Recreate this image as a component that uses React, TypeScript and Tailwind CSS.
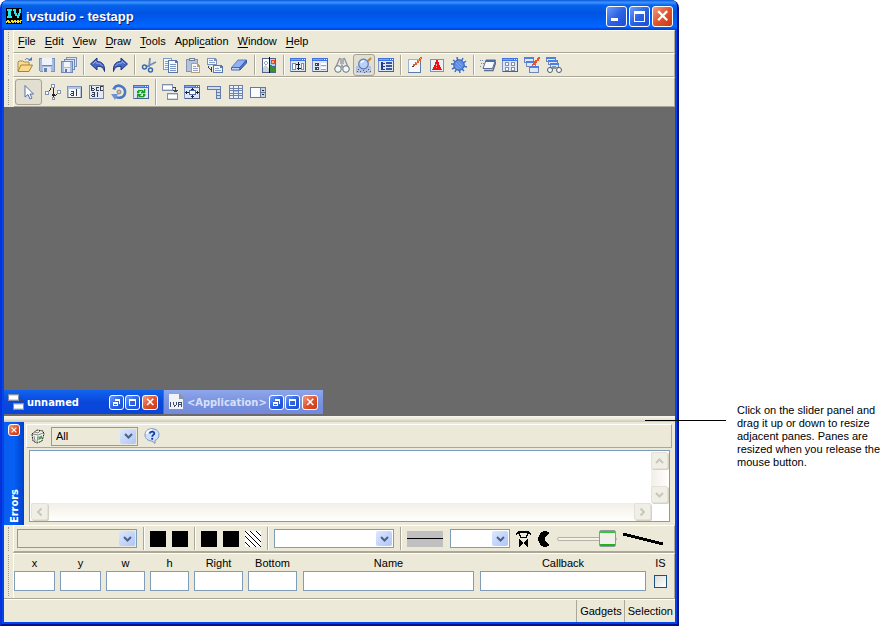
import { Fragment, useState, type ReactNode } from 'react';

const Svg = ({ children, smooth = false }: { children: ReactNode; smooth?: boolean }) => (
  <svg
    viewBox="0 0 16 16"
    className="w-4 h-4 shrink-0"
    fill="none"
    shapeRendering={smooth ? 'auto' : 'crispEdges'}
    aria-hidden="true"
  >
    {children}
  </svg>
);

// Small window with a blue caption, shared by many of the toolbar icons
const Frame = ({ children }: { children?: ReactNode }) => (
  <Svg>
    <path d="M0 1h16v14H0z" fill="#7f95c0" />
    <path d="M1 4h14v10H1z" fill="#dfe6f3" />
    <path d="M0 1h16v3H0z" fill="#3f72e0" />
    <path d="M1 2h10v1H1z" fill="#7fa6f6" />
    <path d="M12 2h1v1h-1zM14 2h1v1h-1z" fill="#fff" />
    <path d="M15 4h1v11H1v-1h14z" fill="#4a628f" />
    {children}
  </Svg>
);

const MiniWin = ({ x, y, w = 9, h = 6 }: { x: number; y: number; w?: number; h?: number }) => (
  <g>
    <rect x={x} y={y} width={w} height={h} fill="#7388ad" />
    <rect x={x + 1} y={y + 2} width={w - 2} height={h - 3} fill="#dfe8f9" />
    <rect x={x} y={y} width={w} height={2} fill="#4d80e6" />
  </g>
);

const icons: Record<string, ReactNode> = {
  open: (
    <Svg smooth>
      <path d="M1 14V5l1-1h4l1 1h5v3" fill="#f4dc9c" stroke="#b08a3c" />
      <path d="M1 14.500 4 8h11.500L12 14.500z" fill="#fbd98a" stroke="#a8823c" />
      <path d="M8 3c1-2 4-2 5 1" stroke="#4a72b8" />
      <path d="M11 3.500h4V0z" fill="#4a72b8" />
    </Svg>
  ),
  save: (
    <Svg>
      <path d="M0 1h16v14H1V14H0z" fill="#7c93be" />
      <path d="M1 2h14v12H1z" fill="#a9bbdc" />
      <path d="M3 1h10v7H3z" fill="#eef2fa" />
      <path d="M3 8h10v1H3z" fill="#6d84b0" />
      <path d="M4 10h8v5H4z" fill="#dfe6f3" />
      <path d="M5 11h3v4H5z" fill="#6b82ae" />
    </Svg>
  ),
  saveAll: (
    <Svg>
      <path d="M5 0h11v10H5z" fill="#7c93be" />
      <path d="M6 1h9v8H6z" fill="#dbe4f4" />
      <path d="M3 2h11v11H3z" fill="#7188b4" />
      <path d="M4 3h9v9H4z" fill="#dbe4f4" />
      <path d="M0 4h12v12H0z" fill="#7088b6" />
      <path d="M1 5h10v10H1z" fill="#a9bbdc" />
      <path d="M3 5h6v5H3z" fill="#f1f4fb" />
      <path d="M3 11h6v4H3z" fill="#e6ebf6" />
      <path d="M4 12h2v3H4z" fill="#5e76a5" />
    </Svg>
  ),
  undo: (
    <Svg smooth>
      <path d="M.5 7 7 1v3.500c5 0 8 3 7.500 10-1-4-3-5.500-7.500-5V13z" fill="#4668c4" stroke="#1d3586" />
      <path d="M3 7l3-3v2c3 0 5 .8 6.500 3" stroke="#8fa9ea" />
    </Svg>
  ),
  redo: (
    <Svg smooth>
      <path d="M15.500 7 9 1v3.500c-5 0-8 3-7.500 10 1-4 3-5.500 7.500-5V13z" fill="#4668c4" stroke="#1d3586" />
      <path d="M13 7l-3-3v2C7 6 5 6.800 3.500 9" stroke="#8fa9ea" />
    </Svg>
  ),
  cut: (
    <Svg smooth>
      <path d="M9 1 8 10M15 5 5 10" stroke="#6f8cba" strokeWidth="1.800" />
      <circle cx="3.500" cy="10" r="2" stroke="#3b68ad" strokeWidth="1.500" />
      <circle cx="9.500" cy="13" r="2" stroke="#3b68ad" strokeWidth="1.500" />
    </Svg>
  ),
  copy: (
    <Svg>
      <path d="M0 1h9v12H0z" fill="#7f97c3" />
      <path d="M1 2h7v10H1z" fill="#f4f7fc" />
      <path d="M2 4h4v1H2zM2 6h4v1H2zM2 8h4v1H2zM2 10h4v1H2z" fill="#8aa0c8" />
      <path d="M5 3h8l2 2v11H5z" fill="#5a75a8" />
      <path d="M6 4h6v2h2v9H6z" fill="#f4f7fc" />
      <path d="M7 7h6v1H7zM7 9h6v1H7zM7 11h6v1H7zM7 13h6v1H7z" fill="#7f97c3" />
    </Svg>
  ),
  paste: (
    <Svg>
      <path d="M1 2h12v13H1z" fill="#8393b0" />
      <path d="M2 3h10v11H2z" fill="#b7c2d6" />
      <path d="M4 1h6v3H4z" fill="#6e7f9f" />
      <path d="M5 2h4v1H5z" fill="#e4e9f2" />
      <path d="M6 6h6l3 3v7H6z" fill="#c09a78" />
      <path d="M7 7h5v3h2v5H7z" fill="#fdfaf4" />
      <path d="M8 9h3v1H8zM8 11h5v1H8zM8 13h5v1H8z" fill="#8ba4d0" />
    </Svg>
  ),
  duplicate: (
    <Svg>
      <path d="M0 1h8l2 2v5H0z" fill="#7c92bb" />
      <path d="M1 2h6v2h2v3H1z" fill="#f4f7fc" />
      <path d="M2 3h4v1H2zM2 5h6v1H2z" fill="#8ba4d0" />
      <path d="M6 8h8l2 2v6H6z" fill="#5a75a8" />
      <path d="M7 9h6v2h2v4H7z" fill="#f4f7fc" />
      <path d="M8 11h4v1H8zM8 13h6v1H8z" fill="#8ba4d0" />
      <path d="M1 9h1v2H1zM2 11h1v1H2zM3 12h2v1H3zM4 10h1v5H4z" fill="#2f3f62" />
    </Svg>
  ),
  eraser: (
    <Svg smooth>
      <path d="M.5 10.500 7 3h8.500L9 10.500z" fill="#8eb1f2" stroke="#5a7cc4" />
      <path d="M.5 10.500H9V13H.5z" fill="#c4d6f8" stroke="#4668b0" />
      <path d="M9 10.500 15.500 3v3L9 13z" fill="#4b77d4" stroke="#3a5ba6" />
    </Svg>
  ),
  image: (
    <Svg>
      <path d="M1 1h14v15H1z" fill="#52648c" />
      <path d="M2 2h6v13H2z" fill="#fff" />
      <path d="M2 10h1V9h1V8h1v1h1v1h1v1h1v4H2z" fill="#cbd3e0" />
      <path d="M4 4h2v1H4zM3 5h1v2H3zM6 5h1v2H6zM4 7h2v1H4z" fill="#9aa6ba" />
      <path d="M9 2h5v7H9z" fill="#a9d0f6" />
      <path d="M10 3h4v4h-4z" fill="#e8491f" />
      <path d="M11 4h2v2h-2z" fill="#ffb273" />
      <path d="M9 8h2v2h2v1h1v4H9z" fill="#35912f" />
      <path d="M8 0h1v16H8z" fill="#000" />
    </Svg>
  ),
  resize: (
    <Frame>
      <path d="M2 6h4v7H2zM11 6h3v7h-3z" fill="#6f8ec8" />
      <path d="M3 7h2v5H3zM12 7h1v5h-1z" fill="#fff" />
      <path d="M6 7h4v1H6zM8 5h1v5H8zM7 11h4v1H7zM8 10h1v3H8z" fill="#10182c" />
    </Frame>
  ),
  inspector: (
    <Frame>
      <path d="M3 6h4v3H3zM3 10h4v3H3z" fill="#3d4558" />
      <path d="M4 7h1v1H4zM5 11h1v1H5z" fill="#fff" />
      <path d="M9 6h5v2H9zM9 10h5v2H9z" fill="#fff" />
      <path d="M9 8h5v1H9zM9 12h5v1H9z" fill="#97a4bc" />
    </Frame>
  ),
  find: (
    <Svg smooth>
      <path d="M2 10 5.500 1.500 7 2v5M14 10l-3.500-8.500L9 2v5" stroke="#8a929e" strokeWidth="1.300" />
      <path d="M7 7.500h2v3H7z" fill="#9aa3b0" />
      <circle cx="4" cy="12" r="3.300" fill="#f2f8f8" stroke="#65737e" />
      <circle cx="12" cy="12" r="3.300" fill="#f2f8f8" stroke="#65737e" />
    </Svg>
  ),
  preview: (
    <Svg smooth>
      <path d="M0 9h15v7H0z" fill="#b4c2de" />
      <path d="M2 12h1v1H2zM4 14h1v1H4zM7 13h1v1H7zM10 14h1v1h-1zM12 12h1v1h-1zM14 14h1v1h-1zM1 14h1v1H1zM8 15h1v1H8z" fill="#42598c" />
      <path d="M11 5l4-4" stroke="#c88b32" strokeWidth="2.200" />
      <circle cx="7.500" cy="7" r="4.800" fill="#b9d1f8" stroke="#5b78b4" strokeWidth="1.200" />
      <path d="M5 6c.5-1.500 2-2 3-2" stroke="#fff" strokeWidth="1.500" />
    </Svg>
  ),
  tree: (
    <Frame>
      <path d="M3 5h2v8H3zM5 6h2v1H5zM5 9h2v1H5zM5 12h2v1H5z" fill="#1e3d96" />
      <path d="M8 5h6v2H8zM8 8h6v2H8zM8 11h6v2H8z" fill="#3a55a0" />
    </Frame>
  ),
  edit: (
    <Svg>
      <path d="M1 2h13v14H1z" fill="#5f7ba9" />
      <path d="M1 2h12v13H1z" fill="#9eb1d0" />
      <path d="M2 3h11v12H2z" fill="#f6f8fc" />
      <path d="M13 0h2v2h-1v2h-2v2h-2v2H8v1H6V7h2V5h2V3h2V1h1z" fill="#e2572b" />
      <path d="M13 1h1v1h-1zM11 3h1v1h-1zM9 5h1v1H9z" fill="#ffab7b" />
      <path d="M5 9h2v1H5z" fill="#563c30" />
    </Svg>
  ),
  alert: (
    <Svg>
      <path d="M1 2h14v13H1z" fill="#7d92b8" />
      <path d="M2 3h12v11H2z" fill="#edf1f8" />
      <path d="M7 3h2v2h1v3h1v2h1v2h1v1H3v-1h1v-2h1V8h1V5h1z" fill="#ee0f0f" />
      <path d="M7 7h1v2H7zM7 10h1v1H7z" fill="#ff9c9c" />
    </Svg>
  ),
  debug: (
    <Svg smooth>
      <path
        d="M2 3l4 3M6 0l1 5M12 1l-2 4M0 7h5M1 12l4-2M4 15l2-4M9 16l-1-4M13 14l-3-3M16 10l-4-1M15 4l-4 3"
        stroke="#3c6cc8"
        strokeWidth="1.500"
      />
      <circle cx="8" cy="8" r="5.300" fill="#5b8ae0" stroke="#3463bd" />
      <path d="M5 6l5 5M7 4.500l4.500 4.500M4.500 9l3 3" stroke="#8fb1f2" />
    </Svg>
  ),
  run: (
    <Svg smooth>
      <path d="M0 3.500h4M1 6.500h3M0 9.500h2" stroke="#7b879b" strokeDasharray="1 1" />
      <path d="M6 3h9.500l-3 8.500H3z" fill="#f7f9fd" stroke="#5a6c90" />
      <path d="M6 3h9.500l-.7 2H5.300z" fill="#4a6ba8" />
      <path d="M4 13.500h9l3-9" stroke="#5a6c90" strokeWidth="1.400" />
    </Svg>
  ),
  palette: (
    <Frame>
      <path d="M3 5h4v4H3zM9 5h4v4H9zM3 10h4v4H3zM9 10h4v4H9z" fill="#8190ab" />
      <path d="M4 6h2v2H4zM10 6h2v2h-2zM4 11h2v2H4zM10 11h2v2h-2z" fill="#fff" />
    </Frame>
  ),
  editPanels: (
    <Svg>
      <MiniWin x={0} y={0} w={10} />
      <MiniWin x={2} y={4} w={10} />
      <MiniWin x={5} y={9} w={10} h={7} />
      <path d="M14 0h2v2h-1v2h-2v2h-2v2H9v1H8V7h1V5h2V3h2V1h1z" fill="#e2572b" />
    </Svg>
  ),
  findPanels: (
    <Svg smooth>
      <MiniWin x={0} y={0} w={10} h={5} />
      <MiniWin x={2} y={3} w={10} h={5} />
      <MiniWin x={4} y={6} w={9} h={5} />
      <path d="M6 9h4v3H6z" fill="#8a939f" />
      <circle cx="4" cy="13" r="2.500" fill="#f2f8f8" stroke="#4e5b66" />
      <circle cx="13" cy="13" r="2.500" fill="#f2f8f8" stroke="#4e5b66" />
    </Svg>
  ),
  pointer: (
    <Svg smooth>
      <path d="M4 1.500v11.500l3-2.500 2 4.500 2-1-2-4h3.500z" fill="#fff" stroke="#4e70ae" />
    </Svg>
  ),
  link: (
    <Svg>
      <path d="M3 7h1v1H3zM4 6h1v1H4zM5 4h1v2H5zM8 2h1v11H8zM7 10h1v2H7zM9 10h1v2H9zM10 11h1v1h-1zM11 10h1v1h-1zM12 9h1v1h-1z" fill="#222" />
      <path d="M0 7h4v4H0zM6 0h4v4H6zM12 6h4v4h-4zM7 13h3v3H7z" fill="#7f93b8" />
      <path d="M1 8h2v2H1zM7 1h2v2H7zM13 7h2v2h-2zM8 14h1v1H8z" fill="#fff" />
    </Svg>
  ),
  label: (
    <Svg>
      <path d="M0 2h15v12H0z" fill="#8095bd" />
      <path d="M14 3h1v11H1v-1h13z" fill="#4a628f" />
      <path d="M1 3h13v10H1z" fill="#b9c6de" />
      <path d="M2 5h11v8H2z" fill="#f4f7fc" />
      <path d="M4 7h3v1H4zM6 8h1v4H6zM4 9h2v1H4zM3 10h1v1H3zM4 11h2v1H4zM9 5h1v7H9z" fill="#333c4e" />
    </Svg>
  ),
  text: (
    <Svg>
      <path d="M0 1h15v14H0z" fill="#7286ab" />
      <path d="M1 2h13v12H1z" fill="#e4eaf5" />
      <path
        d="M2 2h1v5H2zM3 4h2v1H3zM5 5h1v1H5zM3 6h2v1H3zM7 3h3v1H7zM7 4h1v3H7zM8 6h2v1H8zM11 2h3v1h-3zM11 3h1v4h-1zM12 6h2v1h-2zM3 8h3v1H3zM5 9h1v4H5zM3 10h2v1H3zM2 11h1v1H2zM3 12h2v1H3zM8 8h1v5H8z"
        fill="#333c4e"
      />
    </Svg>
  ),
  rotate: (
    <Svg smooth>
      <path d="M3 4c4-5 12-1 11 5-.6 4-5 6-9 4" stroke="#4b76c5" strokeWidth="2.500" />
      <path d="M0 10h7L4 16z" fill="#6b93da" />
      <path d="M1 5l3-3 1 4z" fill="#4b76c5" />
      <circle cx="8" cy="8" r="2" fill="#e2b98c" stroke="#7286ab" />
    </Svg>
  ),
  refresh: (
    <Frame>
      <path
        d="M5 6h5v1h1V5h1v4H8V8h1V7H6v2H4V7h1zM4 10h4v1H7v1h3v-2h2v2h-1v1H6v-1H5v2H4z"
        fill="#12a020"
        stroke="#12a020"
        strokeWidth=".3"
      />
    </Frame>
  ),
  attach: (
    <Svg>
      <path d="M0 0h11v7H0zM5 9h11v7H5z" fill="#7f8eac" />
      <path d="M1 2h9v4H1zM6 11h9v4H6z" fill="#fff" />
      <path d="M1 1h9v1H1zM6 10h9v1H6zM1 5h9v1H1zM6 14h9v1H6z" fill="#d2d9e6" />
      <path d="M11 3h3v1h-3zM13 4h1v3h-1zM11 6h5v1h-5zM12 7h3v1h-3z" fill="#3b4860" />
    </Svg>
  ),
  geometry: (
    <Frame>
      <path d="M1 8h14v1H1zM8 4h1v10H8z" fill="#16213b" />
      <path d="M5 6h7v5H5z" fill="#4c6ba8" />
      <path d="M6 7h5v3H6z" fill="#fff" />
      <path d="M2 7h1v3H2zM13 7h1v3h-1zM7 5h3v1H7zM7 12h3v1H7z" fill="#16213b" />
    </Frame>
  ),
  menuIcon: (
    <Svg>
      <path d="M1 2h14v13h-5V6H1z" fill="#647ba6" />
      <path d="M2 3h12v2H2zM11 6h3v2h-3zM11 9h3v2h-3zM11 12h3v2h-3z" fill="#d3dcee" />
    </Svg>
  ),
  grid: (
    <Svg>
      <path d="M1 1h14v14H1z" fill="#6d83ad" />
      <path
        d="M2 2h3v2H2zM6 2h4v2H6zM11 2h3v2h-3zM2 5h3v1H2zM11 5h3v1h-3zM6 5h4v1H6zM2 7h3v2H2zM11 7h3v2h-3zM2 10h3v1H2zM6 10h4v1H6zM11 10h3v1h-3zM2 12h3v2H2zM6 12h4v2H6zM11 12h3v2h-3zM6 8h4v1H6z"
        fill="#eaf0fa"
      />
      <path d="M6 7h4v1H6z" fill="#f1b74e" />
    </Svg>
  ),
  spin: (
    <Svg>
      <path d="M0 3h16v11H0z" fill="#65799f" />
      <path d="M1 4h9v9H1z" fill="#f9fbfe" />
      <path d="M11 4h4v4h-4zM11 9h4v4h-4z" fill="#c9d3e6" />
      <path d="M12 6h2v1h-2zM12 10h2v1h-2z" fill="#1d2638" />
    </Svg>
  ),
  trash: (
    <Svg smooth>
      <path d="M2 6 7 2l6 1 1 3-2 7-5 2-4-2z" fill="#f2f2ec" stroke="#222" strokeDasharray="2 .7" />
      <path d="M3 6l5 1 5-2M8 8l-1 6M5 4l3 1 2-2M4 8l1 5" stroke="#888" />
      <path d="M8.500 9 12 7.500v3L8.500 12z" fill="#47a447" />
    </Svg>
  ),
  help: (
    <Svg smooth>
      <path d="M8 .7c4.500 0 7 2.700 7 6 0 3-1.700 5-4 5.700V15.500L8 13C4 13 1 10.500 1 7S3.500.7 8 .7z" fill="#cfe0fa" stroke="#7b96c8" />
      <path d="M2.500 6C3 3 5 2 8 2" stroke="#fff" strokeWidth="1.500" />
      <path d="M6 5.500C6 3 10.500 3 10.300 5.500 10 7 8.200 7 8.200 8.800" stroke="#153a9a" strokeWidth="1.800" />
      <circle cx="8.200" cy="10.800" r="1.100" fill="#153a9a" />
    </Svg>
  ),
  ivr: (
    <Svg>
      <path d="M1 0h11l4 4v12H1z" fill="#8a93a8" />
      <path d="M1 0h10v5h4v10H1z" fill="#f0f2f8" />
      <path
        d="M2 8h1v5H2zM5 8h1v3H5zM6 11h1v2H6zM7 11h1v1H7zM8 8h1v3H8zM10 8h1v5h-1zM11 8h2v1h-2zM11 10h2v1h-2zM13 8h1v5h-1z"
        fill="#3c4b6a"
      />
    </Svg>
  ),
};

const menus = [
  ['', 'F', 'ile'],
  ['', 'E', 'dit'],
  ['', 'V', 'iew'],
  ['', 'D', 'raw'],
  ['', 'T', 'ools'],
  ['Appli', 'c', 'ation'],
  ['', 'W', 'indow'],
  ['', 'H', 'elp'],
];

const mainTools = [
  ['open', 'save', 'saveAll'],
  ['undo', 'redo'],
  ['cut', 'copy', 'paste', 'duplicate', 'eraser'],
  ['image'],
  ['resize', 'inspector', 'find', 'preview', 'tree'],
  ['edit', 'alert', 'debug'],
  ['run', 'palette', 'editPanels', 'findPanels'],
];

const editTools = [
  ['link', 'label', 'text', 'rotate', 'refresh'],
  ['attach', 'geometry', 'menuIcon', 'grid', 'spin'],
];

const fields = [
  { label: 'x', cls: 'w-[41px]' },
  { label: 'y', cls: 'w-[41px]' },
  { label: 'w', cls: 'w-[39px]' },
  { label: 'h', cls: 'w-[39px]' },
  { label: 'Right', cls: 'w-[49px]' },
  { label: 'Bottom', cls: 'w-[49px]' },
  { label: 'Name', cls: 'flex-[171] min-w-0 ml-px' },
  { label: 'Callback', cls: 'flex-[166] min-w-0 ml-px' },
];

const Sep = () => (
  <div className="w-[7px] self-stretch flex justify-center py-px shrink-0">
    <div className="w-0.5 bg-[#aca899] border-r border-white" />
  </div>
);

// Dockable bar: dotted grip on the left, raised content area on the right
function Bar({ children, className }: { children: ReactNode; className: string }) {
  return (
    <div className="flex">
      <div className="w-[9px] py-0.5 pl-1 shrink-0">
        <div className="h-full w-px border-l border-dotted border-[#9d9a8a]" />
      </div>
      <div className={'flex-1 min-w-0 flex border border-white border-r-[#aca899] border-b-[#aca899] ' + className}>
        {children}
      </div>
    </div>
  );
}

function ToolButton({ name, pressed }: { name: string; pressed?: boolean }) {
  return (
    <button
      aria-label={name}
      className={
        'h-[22px] flex items-center justify-center shrink-0 ' +
        (name === 'eraser' ? 'w-[25px] ' : 'w-[22px] ') +
        (pressed ? 'border border-[#a5a296] rounded-[3px] bg-[#e2dfd0]' : '')
      }
    >
      {icons[name]}
    </button>
  );
}

function Chevron({ className }: { className: string }) {
  return (
    <svg viewBox="0 0 9 6" className={'w-[9px] h-[6px] ' + className} fill="none" aria-hidden="true">
      <path d="M1 1l3.500 3.500L8 1" stroke="currentColor" strokeWidth="2" />
    </svg>
  );
}

function Combo({ label, value = '', className }: { label: string; value?: string; className: string }) {
  return (
    <div className={'relative shrink-0 border border-[#7f9db9] ' + className}>
      <select aria-label={label} className="appearance-none w-full h-full pl-1 outline-none block">
        <option>{value}</option>
      </select>
      <span className="absolute right-px inset-y-px w-4 rounded-[2px] flex items-center justify-center bg-gradient-to-br from-[#dde7fe] to-[#aec5f7] pointer-events-none">
        <Chevron className="text-[#4d6185]" />
      </span>
    </div>
  );
}

function CaptionGlyph({ kind, large }: { kind: string; large?: boolean }) {
  if (kind === 'close') {
    return (
      <svg viewBox="0 0 10 10" className="w-3/5 h-3/5" aria-hidden="true">
        <path d="M1 1l8 8M9 1l-8 8" stroke="#fff" strokeWidth="2" />
      </svg>
    );
  }
  if (kind === 'minimize') {
    return (
      <svg viewBox="0 0 12 12" className="w-3 h-3" aria-hidden="true">
        <path d="M0 8h7v3H0z" fill="#fff" />
      </svg>
    );
  }
  if (kind === 'restore') {
    return (
      <svg viewBox="0 0 7 7" className="w-[7px] h-[7px]" fill="#fff" shapeRendering="crispEdges" aria-hidden="true">
        <path d="M2 0h5v5H6V2H2zM0 3h5v4H0zM1 5v1h3V5z" fillRule="evenodd" />
      </svg>
    );
  }
  return large ? (
    <svg viewBox="0 0 11 11" className="w-[11px] h-[11px]" fill="#fff" shapeRendering="crispEdges" aria-hidden="true">
      <path d="M0 0h11v3H0zM0 3h1v8H0zM10 3h1v8h-1zM1 10h9v1H1z" />
    </svg>
  ) : (
    <svg viewBox="0 0 7 7" className="w-[7px] h-[7px]" fill="#fff" shapeRendering="crispEdges" aria-hidden="true">
      <path d="M0 0h7v2H0zM0 2h1v5H0zM6 2h1v5H6zM1 6h5v1H1z" />
    </svg>
  );
}

function CaptionButton({ kind, large, className }: { kind: string; large?: boolean; className: string }) {
  return (
    <button
      aria-label={kind}
      className={
        'flex items-center justify-center border border-white rounded-[3px] shrink-0 ' +
        (kind === 'close'
          ? 'bg-gradient-to-br from-[#f09a80] via-[#e0532c] to-[#c83a12] '
          : 'bg-gradient-to-br from-[#6f9bf8] via-[#2c62e4] to-[#1c4ed4] ') +
        className
      }
    >
      <CaptionGlyph kind={kind} large={large} />
    </button>
  );
}

function ChildWindow({ title, icon, active }: { title: string; icon: string; active?: boolean }) {
  return (
    <div
      className={
        'w-[159px] h-6 pl-1 pr-[5px] flex items-center ' +
        (active
          ? 'bg-gradient-to-b from-[#1264ee] via-[#0a48dc] to-[#0845d8] text-white'
          : 'bg-gradient-to-b from-[#8ea6ea] via-[#7b93e0] to-[#7388dc] text-[#d5e0fa]')
      }
    >
      {icons[icon]}
      <span className="flex-1 min-w-0 pl-[3px] font-bold whitespace-nowrap font-['DejaVu_Sans_Condensed','DejaVu_Sans',sans-serif]">
        {title}
      </span>
      <CaptionButton kind="restore" className="w-[15px] h-[15px] mr-px" />
      <CaptionButton kind="maximize" className="w-[15px] h-[15px] mr-0.5" />
      <CaptionButton kind="close" className="w-[16px] h-[15px]" />
    </div>
  );
}

function ScrollButton({ turn }: { turn: string }) {
  return (
    <button
      aria-label="scroll"
      className="w-[17px] h-[17px] shrink-0 flex items-center justify-center rounded-[2px] border border-[#e4e2d8] bg-[#f0efe6] shadow-[1px_1px_0_#d5d2c3]"
    >
      <Chevron className={'text-[#c9c7ba] ' + turn} />
    </button>
  );
}

const Swatch = ({ hatch }: { hatch?: boolean }) => (
  <button aria-label="swatch" className="w-[22px] flex justify-center shrink-0">
    {hatch ? (
      <svg viewBox="0 0 16 16" className="w-4 h-4 bg-white" shapeRendering="crispEdges">
        <path d="M0 11l5 5M0 5l11 11M0 0l16 16M5 0l11 11M11 0l5 5" stroke="#000" />
      </svg>
    ) : (
      <span className="w-4 h-4 bg-black" />
    )}
  </button>
);

export default function App() {
  const [opacity, setOpacity] = useState(100);

  return (
    <div className="min-h-screen flex bg-white text-black text-[11px] leading-[13px] font-['Liberation_Sans',Arial,sans-serif]">
      {/* Application window */}
      <div className="flex-1 min-w-0 flex flex-col rounded-t-lg bg-[#0046e8] border-x-2 border-b-2 border-l-[#0831d9] border-r-[#00138c] border-b-[#00138c]">
        <header className="h-[30px] shrink-0 rounded-t-md pl-1 pr-1 pt-0.5 flex items-center bg-[linear-gradient(#0a58e0_0%,#3a93ff_8%,#0562ea_18%,#0054e3_45%,#0060f8_75%,#0066ff_88%,#003dd7_100%)]">
          <svg viewBox="0 0 16 16" className="w-4 h-4" shapeRendering="crispEdges" aria-hidden="true">
            <path d="M0 0h16v16H0z" fill="#000" />
            <path d="M1 1h5v2H5v5h1v2H1V8h1V3H1zM7 1h3v4h1v2h1V5h1V1h2v4h-1v3h-1v2h-2V8H9V6H8V3H7z" fill="#27e8e8" />
            <path d="M0 13h1v-1h2v1h1v1h1v-2h2v1h1v-1h2v1h1v-1h2v1h1v-1h2v1h-1v2h-1v-1h-1v1h-2v-1h-1v1H9v-1H8v1H6v-1H5v1H2v-1H1v1H0z" fill="#f5e526" />
          </svg>
          <h1 className="flex-1 pl-1 pt-0.5 text-[13px] leading-4 font-bold text-white [text-shadow:1px_1px_0_#0a1e82]">
            ivstudio - testapp
          </h1>
          <div className="flex gap-0.5">
            <CaptionButton kind="minimize" large className="w-[21px] h-[21px]" />
            <CaptionButton kind="maximize" large className="w-[21px] h-[21px]" />
            <CaptionButton kind="close" large className="w-[21px] h-[21px]" />
          </div>
        </header>

        <div className="flex-1 mx-0.5 mb-0.5 flex flex-col bg-[#ece9d8]">
          <Bar className="h-[23px] items-center pl-1 gap-[9px]">
            {menus.map(([before, key, after]) => (
              <button key={key + after}>
                {before}
                <span className="underline underline-offset-2">{key}</span>
                {after}
              </button>
            ))}
          </Bar>

          <Bar className="h-6 items-center">
            {mainTools.map((group, i) => (
              <Fragment key={i}>
                {i > 0 && <Sep />}
                {group.map(name => (
                  <ToolButton key={name} name={name} pressed={name === 'preview'} />
                ))}
              </Fragment>
            ))}
          </Bar>

          <Bar className="h-[30px] items-center pl-px">
            <button
              aria-label="pointer"
              className="w-[27px] h-[26px] flex items-center justify-center border border-[#a5a296] rounded-[3px] bg-[#e2dfd0]"
            >
              {icons.pointer}
            </button>
            {editTools.map((group, i) => (
              <Fragment key={i}>
                {i > 0 && <Sep />}
                {group.map(name => (
                  <ToolButton key={name} name={name} />
                ))}
              </Fragment>
            ))}
          </Bar>

          {/* Workspace with the minimized child windows */}
          <main className="flex-1 min-h-40 bg-[#6a6a6a] flex items-end gap-px pb-0.5">
            <ChildWindow title="unnamed" icon="attach" active />
            <ChildWindow title="<Application>" icon="ivr" />
          </main>

          {/* Slider panel */}
          <div className="relative h-[6px] shrink-0 cursor-row-resize bg-gradient-to-b from-[#f8f7f1] via-[#ece9d8] to-[#c9c6b6]">
            <div className="absolute top-1 -right-[51px] w-[81px] h-px bg-black" />
          </div>

          {/* Errors pane */}
          <section className="flex h-[103px] shrink-0">
            <div className="w-5 flex flex-col items-center justify-between pt-0.5 pb-0.5 bg-gradient-to-r from-[#0a5cf0] via-[#0560f4] to-[#0040cc]">
              <CaptionButton kind="close" className="w-3 h-3" />
              <h2 className="[writing-mode:vertical-rl] rotate-180 font-bold text-white font-['DejaVu_Sans_Condensed','DejaVu_Sans',sans-serif]">
                Errors
              </h2>
            </div>
            <div className="flex-1 min-w-0 flex flex-col pt-0.5 pb-[3px] pl-0.5 pr-[3px]">
              <div className="h-6 flex items-center border border-white border-r-[#aca899] border-b-[#aca899]">
                <button aria-label="clear" className="w-[22px] flex justify-center">{icons.trash}</button>
                <Combo label="Filter" value="All" className="w-[87px] h-[19px] ml-0.5" />
                <button aria-label="help" className="ml-[6px]">{icons.help}</button>
              </div>
              <div className="flex-1 mt-0.5 ml-[3px] mr-0.5 flex flex-col bg-white border border-[#7f9db9]">
                <div className="flex-1 flex">
                  <textarea aria-label="Errors" className="flex-1 resize-none outline-none" rows={1} />
                  <div className="w-[17px] mt-px mr-px flex flex-col justify-between bg-gradient-to-r from-[#f1efe8] to-[#fefefb]">
                    <ScrollButton turn="rotate-180" />
                    <ScrollButton turn="" />
                  </div>
                </div>
                <div className="h-[17px] mb-px ml-px mr-[18px] flex justify-between bg-gradient-to-b from-[#f1efe8] to-[#fefefb]">
                  <ScrollButton turn="rotate-90" />
                  <ScrollButton turn="-rotate-90" />
                </div>
              </div>
            </div>
          </section>

          {/* Drawing attributes */}
          <Bar className="h-7 items-center pl-[3px] border-b-2">
            <Combo label="Font" className="w-[120px] h-[19px] mr-[3px]" />
            <Sep />
            <Swatch />
            <Swatch />
            <Sep />
            <Swatch />
            <Swatch />
            <Swatch hatch />
            <Sep />
            <Combo label="Pattern" className="w-[120px] h-[19px] mx-[3px] bg-white" />
            <Sep />
            <button aria-label="line style" className="w-9 h-4 mx-[3px] flex items-center bg-[#c0c0c0] shrink-0">
              <span className="w-full h-px bg-black" />
            </button>
            <Combo label="Line width" className="w-[60px] h-[19px] ml-1 bg-white" />
            <svg viewBox="0 0 15 16" className="w-[15px] h-4 ml-[6px] shrink-0" shapeRendering="crispEdges">
              <path d="M2 0h11v1h1v1h1v2h-1V3h-2v2h-1v2H9V6h1V4h1V2H4v2h1v2h1v1H4V5H3V3H1v1H0V2h1V1h1z" fill="#000" />
              <path d="M3 8h1v1h1v1h1v1h1v2H6v1H5v1H4v1H3zM12 8v8h-1v-1h-1v-1H9v-1H8v-2h1v-1h1V9h1V8z" fill="#000" />
              <path d="M6 6h3v1H6z" fill="#000" />
            </svg>
            <svg viewBox="0 0 12 16" className="w-3 h-4 ml-[7px] shrink-0" shapeRendering="crispEdges">
              <path d="M5 0h4v1h2v2h-1v1H9v1H8v1H7v4h1v1h1v1h1v1h1v2H9v1H5v-1H3v-1H2v-2H1v-2H0V6h1V4h1V2h1V1h2z" fill="#000" />
            </svg>
            <input
              type="range"
              aria-label="Opacity"
              value={opacity}
              onChange={e => setOpacity(Number(e.target.value))}
              className="appearance-none w-[60px] h-[18px] ml-[7px] shrink-0 bg-transparent [&::-webkit-slider-runnable-track]:h-1 [&::-webkit-slider-runnable-track]:rounded-sm [&::-webkit-slider-runnable-track]:border [&::-webkit-slider-runnable-track]:border-[#b5b2a4] [&::-webkit-slider-runnable-track]:bg-[#f3f2ea] [&::-webkit-slider-thumb]:appearance-none [&::-webkit-slider-thumb]:w-[17px] [&::-webkit-slider-thumb]:h-[17px] [&::-webkit-slider-thumb]:-mt-2 [&::-webkit-slider-thumb]:rounded-[2px] [&::-webkit-slider-thumb]:border [&::-webkit-slider-thumb]:border-[#8b9a9a] [&::-webkit-slider-thumb]:bg-[linear-gradient(#3bc43b_2px,#f1f1ec_2px,#f1f1ec_13px,#21b121_13px)]"
            />
            <svg viewBox="0 0 42 16" className="w-[42px] h-4 ml-[5px] shrink-0" shapeRendering="crispEdges">
              <path d="M1 3l40 10" stroke="#000" strokeWidth="3" />
            </svg>
          </Bar>

          {/* Geometry and naming */}
          <Bar className="h-[45px] pr-[7px] pt-[3px] gap-[5px] border-b-0">
            {fields.map(f => (
              <label key={f.label} className={'flex flex-col items-center gap-px ' + f.cls}>
                <span>{f.label}</span>
                <input className="w-full h-5 px-1 bg-white border border-[#7f9db9] outline-none" />
              </label>
            ))}
            <label className="flex flex-col items-center ml-[3px] gap-[5px]">
              <span>IS</span>
              <input
                type="checkbox"
                className="appearance-none w-[13px] h-[13px] border border-[#1c5180] bg-gradient-to-br from-[#dcdcd7] to-white"
              />
            </label>
          </Bar>

          <footer className="h-6 shrink-0 flex justify-end border-t border-[#aca899] shadow-[inset_0_1px_0_#fff]">
            {['Gadgets', 'Selection'].map(s => (
              <div key={s} className="flex items-center border-l border-[#aca899] pl-[3px] pr-0.5 mt-px">
                {s}
              </div>
            ))}
          </footer>
        </div>
      </div>

      {/* Callout */}
      <aside className="w-[217px] shrink-0 self-end pl-[58px] pr-3 pb-[157px]">
        <p>Click on the slider panel and drag it up or down to resize adjacent panes. Panes are resized when you release the mouse button.</p>
      </aside>
    </div>
  );
}
